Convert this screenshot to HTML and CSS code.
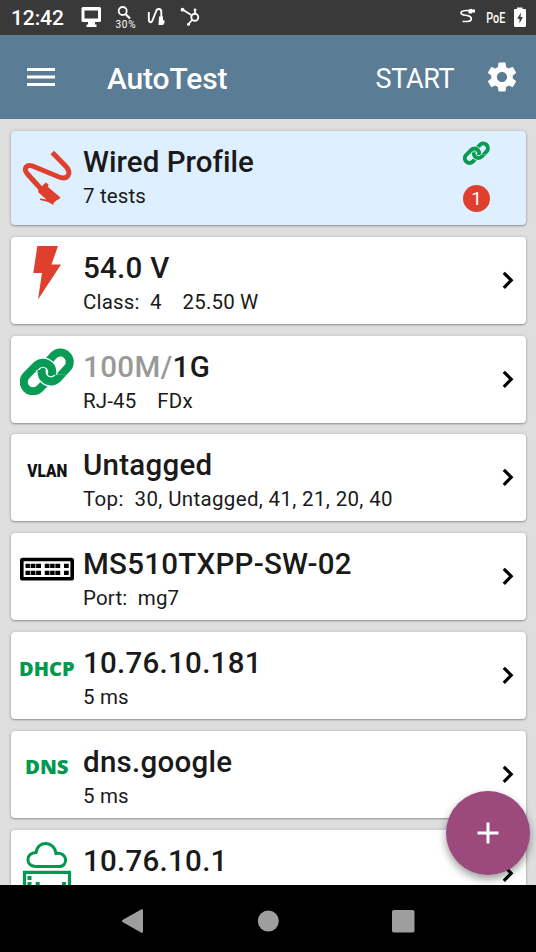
FILE: index.html
```html
<!DOCTYPE html>
<html lang="en">
<head>
<meta charset="utf-8">
<title>AutoTest</title>
<link rel="stylesheet" href="styles.css">
</head>
<body>
<svg class="defs" aria-hidden="true">
  <defs>
    <clipPath id="lower-half"><path d="M55 84H88L98 98H150V145H55Z"/></clipPath>
    <symbol id="link" viewBox="12 18 162 141">
      <g fill="none">
        <rect x="70" y="47" width="98" height="56" rx="28" transform="rotate(-47 119 75)" stroke="currentColor" stroke-width="24"/>
        <rect class="halo" x="17" y="77" width="98" height="56" rx="28" transform="rotate(-45 66 105)" stroke-width="32"/>
        <rect x="17" y="77" width="98" height="56" rx="28" transform="rotate(-45 66 105)" stroke="currentColor" stroke-width="24"/>
        <g clip-path="url(#lower-half)">
          <rect class="halo" x="70" y="47" width="98" height="56" rx="28" transform="rotate(-47 119 75)" stroke-width="32"/>
          <rect x="70" y="47" width="98" height="56" rx="28" transform="rotate(-47 119 75)" stroke="currentColor" stroke-width="24"/>
        </g>
      </g>
    </symbol>
    <symbol id="chevron" viewBox="0 0 12 19"><path d="M1.800 1.800 9.200 9.200 1.800 16.800" fill="none" stroke="#000" stroke-width="3.200"/></symbol>
  </defs>
</svg>
<div class="screen">
  <header class="status">
    <span class="clock">12:42</span>
    <svg class="status-icons" viewBox="75 0 135 35" width="135" height="35">
      <path d="M83 7h16.500q1.500 0 1.500 1.500v12q0 1.500-1.500 1.500H95v2.500h1.500V27h-10v-2.500H88V22h-5q-1.500 0-1.500-1.500v-12Q81.500 7 83 7ZM84.500 10.500v8h13.500v-8Z" fill="#fff" fill-rule="evenodd"/>
      <g fill="none" stroke="#fff">
        <circle cx="122.700" cy="11" r="4" stroke-width="1.800"/>
        <path d="M125.500 14 130 18.500" stroke-width="2.200"/>
        <path d="M148.800 12v6.500c0 5 3 4.500 4 1L156 11.500c1-3.500 5.200-3.200 5.300.5V17" stroke-width="1.900"/>
        <circle cx="194.800" cy="17.300" r="3.500" stroke-width="1.900"/>
        <path d="M182.500 9.500 192 15.500M195 13.500V10M192 20 188.500 24" stroke-width="1.700"/>
      </g>
      <g fill="#fff">
        <path d="M159 16.500h4v3.500l1.500.5v2.500l-1.500 2h-4.500Z"/>
        <circle cx="182.500" cy="9.700" r="1.900"/><circle cx="195" cy="10" r="1.400"/><circle cx="188.500" cy="24.300" r="1.500"/>
      </g>
      <text x="115.500" y="27.500" font-size="10" textLength="20" fill="#fff">30%</text>
    </svg>
    <span class="grow"></span>
    <svg class="status-right" viewBox="455 0 81 35" width="81" height="35">
      <path d="M470 10.800c-4-.6-9-.3-9 1.900 0 2.500 4 2.300 7 3 4.500 1 4.500 5.600-.5 5.800h-5" fill="none" stroke="#fff" stroke-width="1.600"/>
      <path d="M468.500 9.500l3-.8 1 .8h2.500v3h-2.500l-1 1h-3Z" fill="#fff"/>
      <text x="486.300" y="23.200" font-size="15.500" font-weight="500" textLength="19" lengthAdjust="spacingAndGlyphs" fill="#fff">PoE</text>
      <path d="M515 9h2V7.500h5.500V9h2.500q1 0 1 1v15.500q0 1.500-1.500 1.500h-9q-1.500 0-1.500-1.500V10q0-1 1-1Z" fill="#fff"/>
      <path d="M521 12.500 517.200 18.800H519.500V23.500L522.800 17H520.500Z" fill="#393939"/>
    </svg>
  </header>
  <nav class="appbar">
    <svg class="menu" viewBox="0 0 28 18" width="28" height="18"><path d="M0 1.500h28M0 9h28M0 16.500h28" stroke="#fff" stroke-width="3"/></svg>
    <h1>AutoTest</h1>
    <span class="start">START</span>
    <svg class="gear" viewBox="2 2 20 20" width="30" height="30"><path fill="#fff" d="M19.140 12.940c.04-.3.060-.61.060-.94 0-.32-.02-.64-.07-.94l2.030-1.580c.18-.14.23-.41.120-.61l-1.920-3.320c-.12-.22-.37-.29-.59-.22l-2.390.96c-.5-.38-1.030-.7-1.620-.94l-.36-2.540c-.04-.24-.24-.41-.48-.41h-3.840c-.24 0-.43.17-.47.41l-.36 2.540c-.59.240-1.130.570-1.620.940l-2.390-.96c-.22-.08-.47 0-.59.220L2.740 8.870c-.12.210-.08.470.120.610l2.030 1.580c-.05.3-.09.630-.09.940s.02.640.070.940l-2.030 1.580c-.18.140-.23.410-.12.610l1.920 3.320c.12.220.37.290.59.220l2.390-.96c.5.380 1.030.7 1.620.940l.36 2.540c.05.240.24.410.48.410h3.840c.24 0 .44-.17.470-.41l.36-2.540c.59-.24 1.130-.56 1.620-.94l2.390.96c.22.080.47 0 .59-.22l1.920-3.320c.12-.22.070-.47-.12-.61l-2.010-1.580zM12 15.400c-1.880 0-3.400-1.520-3.400-3.400s1.520-3.400 3.400-3.400 3.400 1.520 3.400 3.400-1.520 3.400-3.400 3.400z"/></svg>
  </nav>
  <main class="list">
    <section class="card profile">
      <svg class="icon" viewBox="0 0 72 94">
        <path d="M41.300 21.500 55 35.500C61.500 43 56 49 48 46L24 36C15 32 12 37.500 16.500 43L31 59" fill="none" stroke="#df402d" stroke-width="5"/>
        <path d="M27 60 33 53 35 51.500 37.500 53.500 37 56 49.500 66.500 47.500 68.500 46 69 42.500 72 42.500 74 37 71 29 69V67.500L35.500 68.500 27.500 61.500Z" fill="#df402d"/>
      </svg>
      <div class="text"><h2>Wired Profile</h2><p>7 tests</p></div>
      <div class="badges"><svg class="small-link"><use href="#link"/></svg><span class="count">1</span></div>
    </section>
    <section class="card">
      <svg class="icon" viewBox="0 0 72 87"><path d="M26.300 9H47L40.500 27.500H50L27 62.500 31 36H22.300Z" fill="#df402d"/></svg>
      <div class="text"><h2>54.0 V</h2><p>Class:&nbsp; 4 &nbsp;&nbsp; 25.50 W</p></div>
      <svg class="chevron"><use href="#chevron"/></svg>
    </section>
    <section class="card">
      <div class="icon link-icon"><svg class="big-link"><use href="#link"/></svg></div>
      <div class="text"><h2 class="speed"><span class="dim">100M/</span>1G</h2><p>RJ-45 &nbsp;&nbsp; FDx</p></div>
      <svg class="chevron"><use href="#chevron"/></svg>
    </section>
    <section class="card">
      <svg class="icon" viewBox="0 0 72 87"><text x="16.300" y="43.400" class="vlan" textLength="40" lengthAdjust="spacingAndGlyphs">VLAN</text></svg>
      <div class="text"><h2>Untagged</h2><p class="vlans">Top:&nbsp; 30, Untagged, 41, 21, 20, 40</p></div>
      <svg class="chevron"><use href="#chevron"/></svg>
    </section>
    <section class="card">
      <svg class="icon" viewBox="0 0 72 87">
        <rect x="10.800" y="26.500" width="50.400" height="19.200" rx=".8" fill="#fff" stroke="#000" stroke-width="3.600"/>
        <path d="M14.500 32.800H30M33.800 32.800H49.200M53 32.800H57.700M14.500 39.800H30M33.800 39.800H49.200M53 39.800H57.700" stroke="#000" stroke-width="4.300"/>
        <path d="M19.400 30v12M24.700 30v12M38.700 30v12M44 30v12" stroke="#fff" stroke-width=".7"/>
      </svg>
      <div class="text"><h2>MS510TXPP-SW-02</h2><p>Port:&nbsp; mg7</p></div>
      <svg class="chevron"><use href="#chevron"/></svg>
    </section>
    <section class="card">
      <svg class="icon" viewBox="0 0 72 87"><text x="8" y="43.700" class="proto" textLength="55.500" lengthAdjust="spacingAndGlyphs">DHCP</text></svg>
      <div class="text"><h2>10.76.10.181</h2><p>5 ms</p></div>
      <svg class="chevron"><use href="#chevron"/></svg>
    </section>
    <section class="card">
      <svg class="icon" viewBox="0 0 72 87"><text x="14" y="43.400" class="proto" textLength="43.500" lengthAdjust="spacingAndGlyphs">DNS</text></svg>
      <div class="text"><h2>dns.google</h2><p>5 ms</p></div>
      <svg class="chevron"><use href="#chevron"/></svg>
    </section>
    <section class="card">
      <svg class="icon" viewBox="0 0 72 87">
        <g fill="none" stroke="#009a4e" stroke-width="3">
          <path d="M25 36.500C14 36.500 14.500 22.500 25 22.500 26.500 10 43.500 10.500 45 23.500 57 21.500 57.500 36.500 48 36.500Z"/>
          <path d="M13.500 70V42.300H58.500V70" stroke-width="3.200"/>
        </g>
        <path d="M16.500 46h4v4h-4zM16.500 52h4v4h-4zM24.700 52h4v4h-4zM51 52h4v4h-4z" fill="#009a4e"/>
      </svg>
      <div class="text"><h2>10.76.10.1</h2></div>
      <svg class="chevron"><use href="#chevron"/></svg>
    </section>
    <button class="fab" aria-label="Add"><svg viewBox="0 0 22 22" width="22" height="22"><path d="M11 .5v21M.5 11h21" stroke="#fff" stroke-width="3"/></svg></button>
  </main>
  <footer class="navbar">
    <svg viewBox="0 0 536 67" width="536" height="67" fill="#9e9e9e">
      <path d="M122.500 35.100 141.500 24.300Q143 23.700 143 25.300V46.700Q143 48.300 141.500 47.700L122.500 36.900Q121.300 36 122.500 35.100Z"/>
      <circle cx="268.300" cy="36" r="10.500"/><rect x="392" y="25" width="22.500" height="22.500" rx="1.800"/>
    </svg>
  </footer>
</div>
</body>
</html>
```
FILE: styles.css
```css
* { box-sizing: border-box; }
body { margin: 0; font-family: Roboto, "Liberation Sans", sans-serif; color: #1a1a1a; }
h1, h2, p { margin: 0; font-weight: 400; }
svg { display: block; flex: none; }
.defs { position: absolute; width: 0; height: 0; }
.screen { width: 536px; height: 952px; display: flex; flex-direction: column; overflow: hidden; background: #dedede; }

.status { height: 35px; flex: none; display: flex; background: #393939; color: #fff; }
.clock { width: 75px; padding-left: 11px; font-size: 21px; font-weight: 500; line-height: 36px; letter-spacing: -.1px; }
.grow { flex: 1; }

.appbar { height: 84px; flex: none; display: flex; align-items: center; background: #5a7c94; color: #fff; }
.menu { margin-left: 27px; }
.appbar h1 { width: 268.5px; margin-left: 52px; font-size: 30px; font-weight: 500; line-height: 40px; padding-top: 4px; letter-spacing: -.15px; }
.start { width: 111.5px; font-size: 27px; line-height: 40px; padding-top: 3px; letter-spacing: -.3px; }

.list { flex: 1; min-height: 0; position: relative; overflow: hidden; padding: 12px 10px 0 11px; display: flex; flex-direction: column; gap: 11.8px; }
.card { height: 87px; flex: none; display: flex; background: #fff; border-radius: 4px; box-shadow: 0 1px 2px rgba(0,0,0,.3), 0 0 3px 1px rgba(0,0,0,.08); }
.profile { height: 94px; background: #deefff; }
.icon { width: 72px; height: 100%; flex: none; }
.text { flex: 1; padding-top: 12px; white-space: nowrap; }
.text h2 { font-size: 29.5px; font-weight: 500; line-height: 38px; letter-spacing: .27px; }
.profile .text h2 { letter-spacing: .05px; }
.text .speed { letter-spacing: .4px; }
.text p { font-size: 20.5px; line-height: 30px; letter-spacing: .15px; }
.text .vlans { letter-spacing: .34px; }
.dim { color: #999; }
.chevron { width: 12px; height: 19px; margin: 34px 12px 0 0; }

.link-icon { padding: 12px 0 0 9px; color: #089b56; }
.big-link { width: 54px; height: 47px; }
.small-link { width: 27px; height: 24px; color: #089b56; }
.halo { stroke: #f4faff; }
.badges { width: 63px; padding-top: 10px; display: flex; flex-direction: column; gap: 20px; }
.count { width: 27px; height: 27px; border-radius: 50%; background: #df402d; color: #fff; font-size: 19px; line-height: 27px; text-align: center; }
.vlan { font-size: 19px; font-weight: 900; fill: #111; }
.proto { font-family: "Open Sans", sans-serif; font-size: 19.5px; font-weight: 800; fill: #009a4e; }

.fab { position: absolute; left: 446px; top: 671.5px; width: 84px; height: 84px; padding: 0; border: 0; border-radius: 50%; background: #9b4a7b; display: flex; align-items: center; justify-content: center; box-shadow: 0 4px 8px rgba(0,0,0,.4); }
.navbar { height: 67px; flex: none; background: #000; }
```
